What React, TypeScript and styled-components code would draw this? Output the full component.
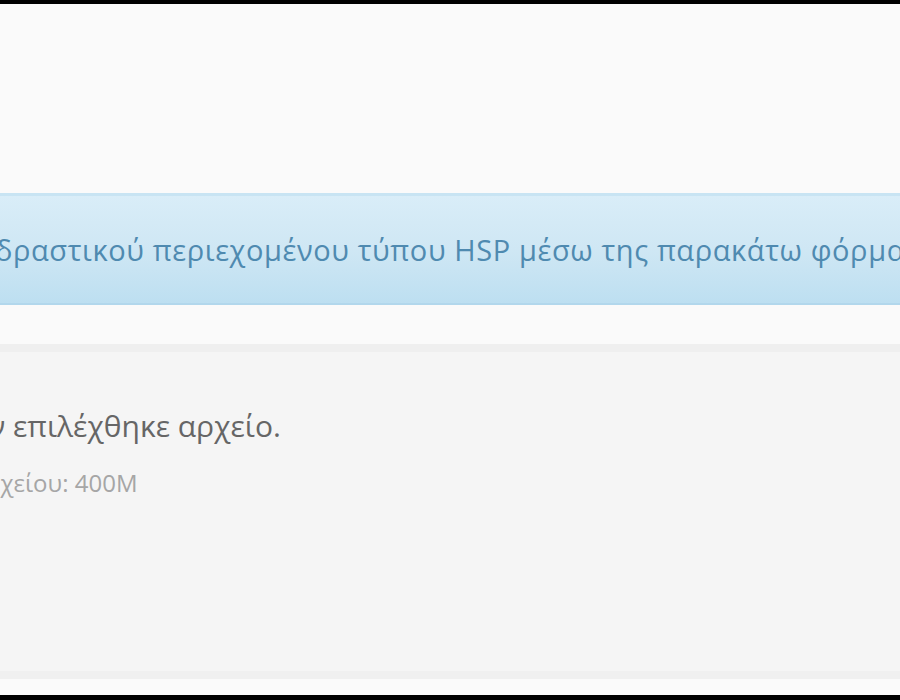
import React from 'react';
import styled, { createGlobalStyle } from 'styled-components';

const GlobalStyle = createGlobalStyle`
  html, body {
    margin: 0;
    padding: 0;
    background: #000;
    overflow: hidden;
  }
`;

const Frame = styled.div`
  height: 700px;
  box-sizing: border-box;
  border-top: 4px solid #000;
  border-bottom: 5px solid #000;
  background: #fafafa;
  display: flex;
  flex-direction: column;
  font-family: 'Open Sans', 'Noto Sans', 'DejaVu Sans', sans-serif;
  overflow: hidden;
`;

const Header = styled.div`
  height: 189px;
  flex-shrink: 0;
`;

const Alert = styled.div`
  height: 112px;
  flex-shrink: 0;
  box-sizing: border-box;
  border-top: 3px solid #c8e4f3;
  border-bottom: 2px solid #b2d7ec;
  background: linear-gradient(to bottom, #d9edf8 0%, #cfe7f4 50%, #bddff1 100%);
  display: flex;
  align-items: center;
  white-space: nowrap;
`;

const AlertText = styled.span`
  margin-left: -5px;
  font-size: 29px;
  color: #4f8ab0;
  letter-spacing: 0.6px;
  word-spacing: 0px;
`;

const Panel = styled.div`
  margin-top: 39px;
  flex: 1;
  box-sizing: border-box;
  border-top: 8px solid #efefef;
  border-bottom: 8px solid #f0f0f0;
  background: #f5f5f5;
  padding-top: 54px;
  display: flex;
  flex-direction: column;
  gap: 22px;
  white-space: nowrap;
`;

const FileStatus = styled.div`
  margin-left: -11px;
  font-size: 30px;
  line-height: 40px;
  color: #666;
`;

const Hint = styled.div`
  margin-left: -14px;
  font-size: 24px;
  line-height: 30px;
  color: #a6a6a6;
`;

const Footer = styled.div`
  height: 16px;
  flex-shrink: 0;
`;

export default function App() {
  return (
    <>
      <GlobalStyle />
      <Frame>
        <Header />
        <Alert>
          <AlertText>δραστικού περιεχομένου τύπου HSP μέσω της παρακάτω φόρμας.</AlertText>
        </Alert>
        <Panel>
          <FileStatus>ν επιλέχθηκε αρχείο.</FileStatus>
          <Hint>ρχείου: 400M</Hint>
        </Panel>
        <Footer />
      </Frame>
    </>
  );
}
